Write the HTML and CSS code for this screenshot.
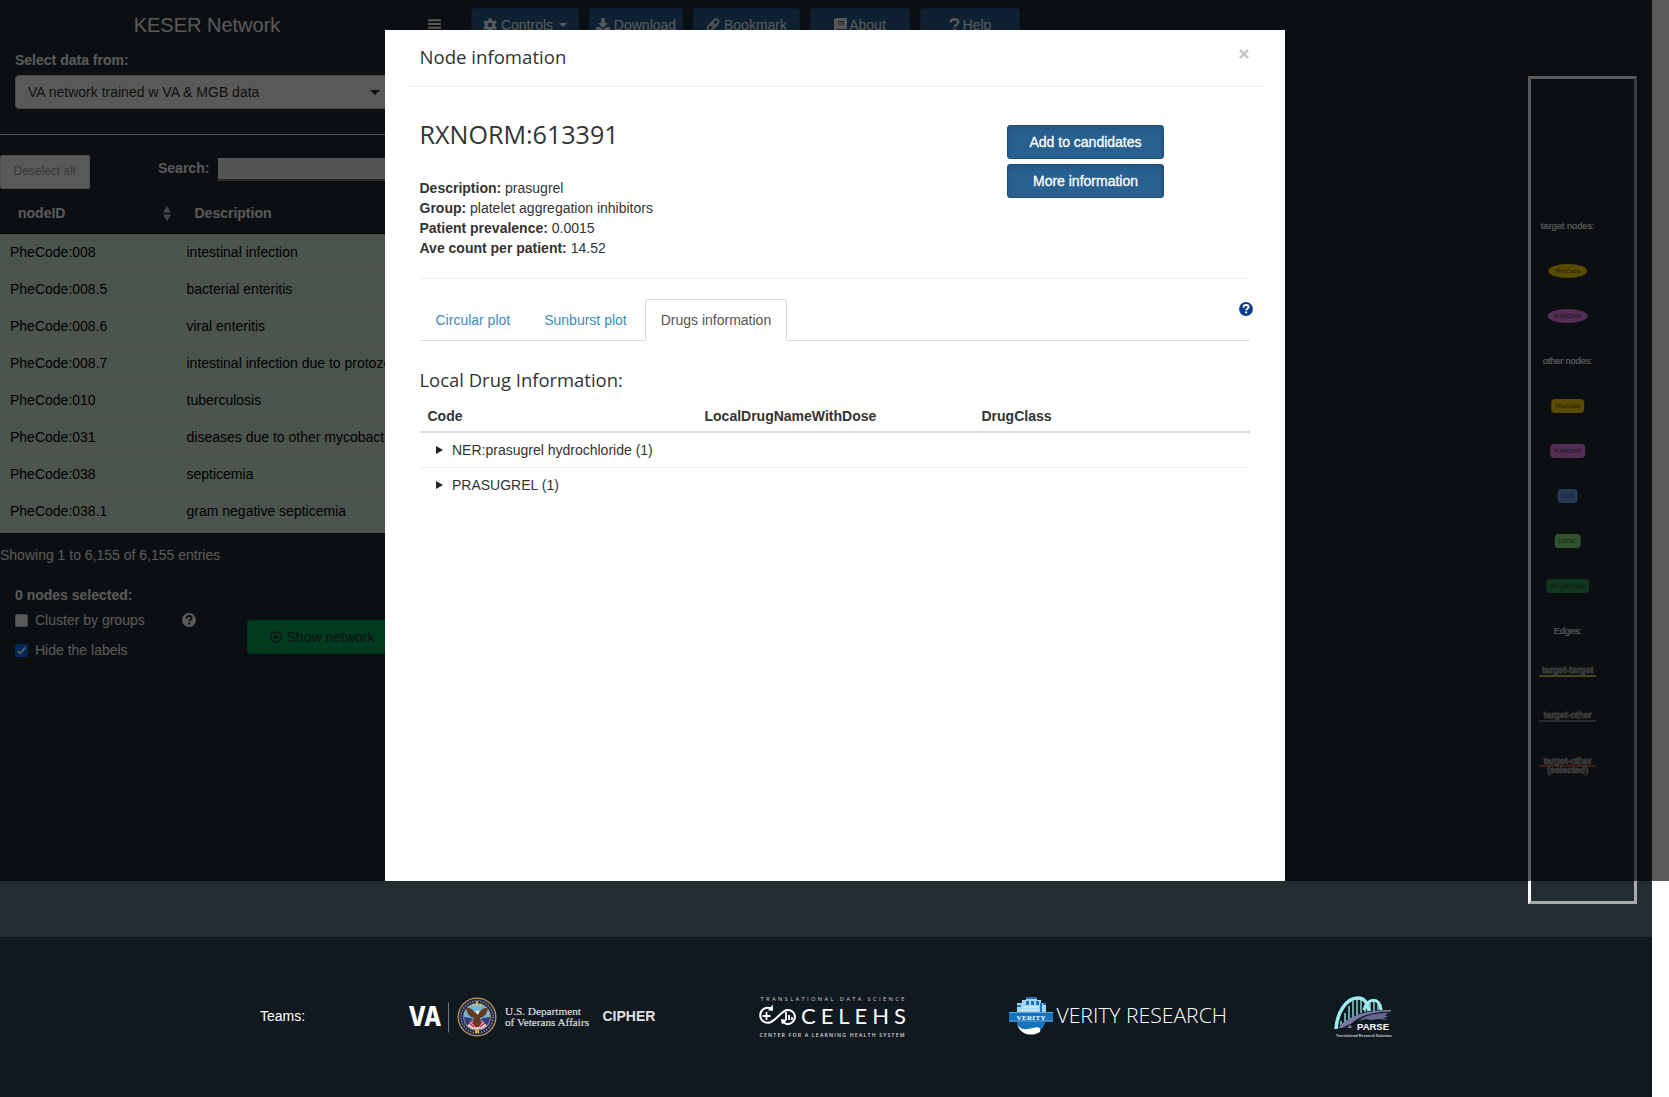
FILE: index.html
```html
<!DOCTYPE html>
<html lang="en">
<head>
<meta charset="utf-8">
<title>KESER Network</title>
<link rel="stylesheet" href="styles.css">
</head>
<body>
<div class="page">
  <main class="app">
    <aside class="sidebar">
      <h1 class="brand">KESER Network</h1>
      <div class="source">
        <label class="bold">Select data from:</label>
        <div class="select"><span>VA network trained w VA &amp; MGB data</span><i class="caret"></i></div>
      </div>
      <div class="rule"></div>
      <div class="tools">
        <button class="deselect">Deselect all</button>
        <span class="search-label">Search:</span>
        <span class="search-input"></span>
      </div>
      <div class="thead">
        <span>nodeID</span>
        <svg class="sort" width="8" height="15" viewBox="0 0 8 15"><path d="M0 6.6L4 0l4 6.6zM0 8.4h8L4 15z" fill="#ccc"/></svg>
        <span>Description</span>
      </div>
      <div class="rows">
        <div class="row"><span>PheCode:008</span><span>intestinal infection</span></div>
        <div class="row"><span>PheCode:008.5</span><span>bacterial enteritis</span></div>
        <div class="row"><span>PheCode:008.6</span><span>viral enteritis</span></div>
        <div class="row"><span>PheCode:008.7</span><span>intestinal infection due to protozoa</span></div>
        <div class="row"><span>PheCode:010</span><span>tuberculosis</span></div>
        <div class="row"><span>PheCode:031</span><span>diseases due to other mycobacteria</span></div>
        <div class="row"><span>PheCode:038</span><span>septicemia</span></div>
        <div class="row"><span>PheCode:038.1</span><span>gram negative septicemia</span></div>
      </div>
      <div class="showing">Showing 1 to 6,155 of 6,155 entries</div>
      <div class="options">
        <div class="checks">
          <div class="bold">0 nodes selected:</div>
          <div class="check first"><i class="box"></i><span>Cluster by groups</span>
            <svg class="hint" width="14" height="14" viewBox="0 0 14 14"><circle cx="7" cy="7" r="7" fill="#fff"/><path d="M4.500 5.500C4.600 3.900 5.700 3.100 7.100 3.100c1.500 0 2.500.8 2.500 2 0 1.700-2.400 1.600-2.400 3.200" fill="none" stroke="#222d32" stroke-width="2"/><rect x="6.100" y="9.400" width="2.100" height="1.900" fill="#222d32"/></svg>
          </div>
          <div class="check"><i class="box on"><svg width="13" height="13" viewBox="0 0 13 13"><path d="M2.800 6.800l2.500 2.600 5-6" fill="none" stroke="#fff" stroke-width="1.900"/></svg></i><span>Hide the labels</span></div>
        </div>
        <button class="show"><svg width="12" height="12" viewBox="0 0 12 12"><circle cx="6" cy="6" r="5.200" fill="none" stroke="#333" stroke-width="1.300"/><path d="M4 3l5 3-5 3z" fill="#333"/></svg>Show network</button>
      </div>
    </aside>
    <nav class="nav">
      <svg class="menu" width="13" height="13" viewBox="0 0 13 13"><path d="M0 1.200h13M0 5h13M0 8.800h13M0 12h13" stroke="#fff" stroke-width="2"/></svg>
      <button class="nbtn w1"><svg width="14" height="14" viewBox="0 0 14 14"><circle cx="7" cy="7" r="3.700" fill="none" stroke="#fff" stroke-width="3"/><path d="M7 0v3M7 11v3M.900 3.500l2.600 1.500M10.500 9l2.600 1.500M.900 10.500L3.500 9M10.500 5l2.600-1.500" stroke="#fff" stroke-width="2.800"/></svg>Controls<i class="caret small"></i></button>
      <button class="nbtn w2"><svg width="14" height="14" viewBox="0 0 14 14"><path d="M5.200 0h3.600v5h3.200L7 10 2 5h3.200zM0 9.300h4l3 2.700 3-2.700h4V14H0z" fill="#fff"/></svg>Download</button>
      <button class="nbtn w3"><svg width="14" height="14" viewBox="0 0 14 14"><g fill="none" stroke="#fff" stroke-width="1.700"><rect x="6.500" y=".8" width="5" height="8" rx="2.500" transform="rotate(42 9 4.800)"/><rect x="2.700" y="4.900" width="5" height="8" rx="2.500" transform="rotate(42 5.200 8.900)"/></g></svg>Bookmark</button>
      <button class="nbtn w4"><svg width="13" height="14" viewBox="0 0 13 14"><path d="M2.500 0H13v10.500h-1v2h1V14H2.500A2.500 2.500 0 0 1 0 11.500v-9A2.500 2.500 0 0 1 2.500 0z" fill="#fff"/><path d="M3.800 3.700h6.500M3.800 6h6.500M2.500 11.500h8.500" stroke="#286090" stroke-width="1.200"/></svg>About</button>
      <button class="nbtn w5"><svg width="11" height="14" viewBox="0 0 11 14"><path d="M1.500 4.500C1.700 2.300 3.200 1.200 5.400 1.200c2.300 0 3.900 1.200 3.900 3 0 2.600-3.700 2.500-3.700 5" fill="none" stroke="#fff" stroke-width="2.400"/><rect x="4.300" y="10.800" width="2.700" height="2.700" fill="#fff"/></svg>Help</button>
    </nav>
    <div class="legend">
      <svg width="103" height="822" viewBox="0 0 103 822">
        <g class="lg-title">
          <text x="36.700" y="150" textLength="54">target nodes:</text>
          <text x="36.700" y="285" textLength="50">other nodes:</text>
          <text x="36.700" y="555" textLength="28">Edges:</text>
        </g>
        <ellipse cx="36.700" cy="192" rx="19.300" ry="7" fill="#ffd700"/>
        <ellipse cx="36.700" cy="237" rx="20" ry="7" fill="#ee82ee"/>
        <rect x="20.200" y="320" width="33" height="14" rx="4" fill="#ffd700"/>
        <rect x="19.200" y="365" width="35" height="14" rx="4" fill="#ee82ee"/>
        <rect x="26.700" y="410" width="20" height="14" rx="4" fill="#6ca6f5"/>
        <rect x="23.700" y="455" width="26" height="14" rx="4" fill="#90ee90"/>
        <rect x="15.200" y="500" width="43" height="14" rx="4" fill="#2e9c58"/>
        <g class="lg-node">
          <text x="36.700" y="194" textLength="25" lengthAdjust="spacingAndGlyphs">PheCode</text>
          <text x="36.700" y="239" textLength="27" lengthAdjust="spacingAndGlyphs">RXNORM</text>
          <text x="36.700" y="329" textLength="25" lengthAdjust="spacingAndGlyphs">PheCode</text>
          <text x="36.700" y="374" textLength="27" lengthAdjust="spacingAndGlyphs">RXNORM</text>
          <text x="36.700" y="419" textLength="13" lengthAdjust="spacingAndGlyphs">CCS</text>
          <text x="36.700" y="464" textLength="19" lengthAdjust="spacingAndGlyphs">LOINC</text>
          <text x="36.700" y="509" textLength="36" lengthAdjust="spacingAndGlyphs">VA Lab Code</text>
        </g>
        <path d="M8 597h57" stroke="#d8c832" stroke-width="2"/>
        <path d="M8 642h57" stroke="#999" stroke-width="1.300"/>
        <path d="M8 686.700h57" stroke="#c65a2c" stroke-width="2"/>
        <g class="lg-edge">
          <text x="36.700" y="594" textLength="51">target-target</text>
          <text x="36.700" y="639" textLength="48">target-other</text>
          <text x="36.700" y="685" textLength="48">target-other</text>
          <text x="36.700" y="694" textLength="41">(selected)</text>
        </g>
      </svg>
    </div>
    <div class="gutter"></div>
  </main>

  <footer class="footer">
    <span class="teams">Teams:</span>
    <svg class="va" width="185" height="46" viewBox="0 0 185 46">
      <text x="3.500" y="31" class="va-mark" textLength="33" lengthAdjust="spacingAndGlyphs">VA</text>
      <path d="M43.500 7.500v30" stroke="#6d747a"/>
      <circle cx="72" cy="22" r="19.500" fill="#c99b4b"/>
      <circle cx="72" cy="22" r="18.300" fill="#1d2855"/>
      <circle cx="72" cy="22" r="16" fill="none" stroke="#a69a7c" stroke-width="1.500" stroke-dasharray="1.200 1.600"/>
      <circle cx="72" cy="22" r="13.800" fill="#c99b4b"/>
      <circle cx="72" cy="22" r="13" fill="#73b3d8"/>
      <path d="M59 22l7 1 6 4 6-4 7-1a13 13 0 0 1-26 0z" fill="#2c3c7c"/>
      <path d="M62 31l5-6 5 5 5-5 5 6-5 3H67z" fill="#d9c9d0"/>
      <path d="M64 28l5 4M66 26l5 6M80 28l-5 4M78 26l-5 6" stroke="#c32f45" stroke-width="1.300"/>
      <path d="M61 13c4-1 7 2 9 5l2-2 2 2c2-3 5-6 9-5-1 5-3 9-8 10l1 5-3 4h-2l-3-4 1-5c-5-1-7-5-8-10z" fill="#653a22"/>
      <path d="M70.500 16l3-.5.5 3-2 1z" fill="#fff"/>
      <path d="M72 6v5M68 9l1 2M76 9l-1 2" stroke="#ddd06a" stroke-width="1.500"/>
      <path d="M70 34h4v4h-4z" fill="#d1a83b"/>
      <text x="100" y="20" class="va-name" textLength="76" lengthAdjust="spacingAndGlyphs">U.S. Department</text>
      <text x="100" y="31" class="va-name" textLength="84" lengthAdjust="spacingAndGlyphs">of Veterans Affairs</text>
    </svg>
    <span class="cipher">CIPHER</span>
    <svg class="celehs" width="150" height="46" viewBox="0 0 150 46">
      <text x="3.500" y="7" class="cel-small" textLength="144">TRANSLATIONAL DATA SCIENCE</text>
      <g fill="none" stroke="#fff" stroke-width="2">
        <path d="M14 14.500A7.500 7.500 0 1 0 14 28C20 25 24 18 29 16.200a7 7 0 1 1-4 10.500"/>
        <path d="M9.500 18v8M5.500 22h8M29 18v8M32 21v5M35 23v3" stroke-width="1.800"/>
      </g>
      <path d="M11 16.500l5 .2-.3-6.200zM24 25l6 1-5 4.500z" fill="#fff"/>
      <text x="44" y="29.500" class="cel-mark" textLength="105">CELEHS</text>
      <text x="2.500" y="42.500" class="cel-sub" textLength="145">CENTER FOR A LEARNING HEALTH SYSTEM</text>
    </svg>
    <svg class="verity" width="222" height="46" viewBox="0 0 222 46">
      <path d="M8 25h28v3a14.500 14.500 0 0 1-28 0z" fill="#1873bd"/>
      <path d="M8 29c3 6 9 6 16 4s8 1 7 4c-8 5-20 3-23-8z" fill="#fff"/>
      <path d="M8 20V8h5V5h4V2h11v3h4v3h5v12z" fill="#a9d5f3"/>
      <path d="M17 2h11v2H17zM17 6h3v4h-3zM22 6h3v4h-3zM27 6h3v4h-3zM31 8h2v11h-2zM8 10h4v2H8zM34 8h3v2h-3z" fill="#1873bd"/>
      <path d="M14 12h15M12 15h17" stroke="#e5f4ff"/>
      <path d="M0 17h44v10H0z" fill="#1873bd"/>
      <path d="M0 17.500h44M0 26h44" stroke="#6fb0df" stroke-width=".8"/>
      <text x="7.500" y="24.700" class="ver-badge" textLength="29">VERITY</text>
      <text x="47.500" y="28" class="ver-name" textLength="170.500" lengthAdjust="spacingAndGlyphs">VERITY RESEARCH</text>
    </svg>
    <svg class="parse" width="64" height="50" viewBox="0 0 64 50">
      <g fill="none" stroke="#9fecf0">
        <path d="M2 34C3 18 12 3 24 3c7 0 9 5 11 13" stroke-width="3.500"/>
        <path d="M30 15C34 2 46 2 47 15" stroke-width="3.200"/>
        <path d="M7 26v4M11 18v9M15 11v13M19 6v16M23 4v16M27 5v13M31 10v7M36 8v8M40 6v10M44 8v7" stroke-width="1.300"/>
      </g>
      <path d="M4 33C15 20 33 15 57 15v1.500C35 17 22 22 13 33h5l-2-4-8 4z" fill="#77779f"/>
      <path d="M24 26c10-7 18-8 31-8l-4 2 3 2-5 1 5 2-9-1-9 1-4-1z" fill="#66668f"/>
      <text x="23" y="35" class="par-name" textLength="32" lengthAdjust="spacingAndGlyphs">PARSE</text>
      <text x="2" y="42" class="par-sub" textLength="56" lengthAdjust="spacingAndGlyphs">Translational Research Solutions</text>
    </svg>
  </footer>

  <div class="backdrop">
    <section class="modal">
      <header class="modal-head">
        <h2>Node infomation</h2>
        <svg class="close" width="10" height="10" viewBox="0 0 10 10"><path d="M1 1l8 8M9 1L1 9" stroke="#c8c8c8" stroke-width="2.600"/></svg>
      </header>
      <div class="modal-body">
        <div class="summary">
          <div class="facts">
            <h3>RXNORM:613391</h3>
            <p><b>Description:</b> prasugrel</p>
            <p><b>Group:</b> platelet aggregation inhibitors</p>
            <p><b>Patient prevalence:</b> 0.0015</p>
            <p><b>Ave count per patient:</b> 14.52</p>
          </div>
          <div class="actions">
            <button class="primary">Add to candidates</button>
            <button class="primary">More information</button>
          </div>
        </div>
        <div class="tabs">
          <span class="tab">Circular plot</span>
          <span class="tab">Sunburst plot</span>
          <span class="tab active">Drugs information</span>
          <svg class="help" width="14" height="14" viewBox="0 0 14 14"><circle cx="7" cy="7" r="6.900" fill="#0d3a8c"/><path d="M4.500 5.500C4.600 3.900 5.700 3.100 7.100 3.100c1.500 0 2.500.8 2.500 2 0 1.700-2.400 1.600-2.400 3.200" fill="none" stroke="#fff" stroke-width="2"/><rect x="6.100" y="9.400" width="2.100" height="1.900" fill="#fff"/></svg>
        </div>
        <h4>Local Drug Information:</h4>
        <div class="drug head"><span>Code</span><span>LocalDrugNameWithDose</span><span>DrugClass</span></div>
        <div class="drug item"><i class="arrow"></i>NER:prasugrel hydrochloride (1)</div>
        <div class="drug item last"><i class="arrow"></i>PRASUGREL (1)</div>
      </div>
    </section>
  </div>
</div>
</body>
</html>
```
FILE: styles.css
```css
* { box-sizing: border-box; }
body { margin: 0; font: 14px/20px "Liberation Sans", Arial, sans-serif; color: #333; background: #fff; }
h1, h2, h3, h4, p { margin: 0; font-weight: 400; }
button { font: inherit; cursor: pointer; }
svg { display: block; flex: none; }
i { display: block; flex: none; }

.page { position: relative; width: 1669px; height: 1097px; overflow: hidden; }
.app { display: flex; height: 937px; background: #222d32; color: #fff; }
.bold { font-weight: 700; }

/* sidebar */
.sidebar { width: 414px; flex: none; overflow: hidden; }
.brand { font-size: 20px; line-height: 50px; text-align: center; }
.source { padding-left: 15px; }
.source label { display: block; margin-bottom: 5px; }
.select { display: flex; align-items: center; justify-content: space-between; width: 376px; height: 34px; padding: 0 10px 0 12px; border: 1px solid #ccc; border-radius: 4px; background: #fff; color: #333; }
.caret { border: 5px solid transparent; border-top-color: #333; border-bottom: 0; }
.caret.small { border-width: 4px 4px 0; border-top-color: #fff; margin-left: 2px; }
.rule { height: 1px; margin-top: 25px; background: #eee; }
.tools { display: flex; height: 54px; padding-top: 20px; }
.deselect { width: 90px; height: 34px; margin-right: 68px; padding: 0 1px 3px 0; border: 1px solid #ddd; border-radius: 2px; background: #fff; color: #a0a0a0; font-size: 12px; }
.search-label { width: 59px; padding-top: 3px; font-weight: 700; }
.search-input { flex: 1; height: 24px; margin-top: 2px; border: 1px solid #333; border-bottom: 2px solid #777; background: #efefef; }
.thead { display: flex; height: 45px; padding: 14px 0 0 18px; border-bottom: 1px solid #000; font-weight: 700; }
.thead span:first-child { width: 144.500px; }
.sort { margin: 3px 24px 0 0; }
.rows { height: 300px; border-bottom: 1px solid #000; background: #d6f2df; color: #000; overflow: hidden; }
.row { display: flex; height: 37px; padding: 8px 0 0 10px; border-bottom: 1px solid #e0d6d4; white-space: nowrap; }
.row span:first-child { width: 176.500px; flex: none; }
.showing { margin-top: 11px; }
.options { display: flex; margin-top: 20px; padding-left: 15px; }
.checks { width: 232px; flex: none; }
.check { display: flex; align-items: center; height: 20px; margin-top: 10px; }
.check.first { margin-top: 5px; }
.box { width: 13px; height: 13px; margin-right: 7px; border: 1px solid #ccc; border-radius: 2px; background: #fff; }
.box.on { border: 0; background: #0075ff; }
.hint { margin-left: 37px; }
.show { display: flex; align-items: center; justify-content: center; gap: 5px; width: 152px; height: 34px; margin-top: 35px; padding: 0 8px 0 6px; flex: none; border: 1px solid #008d4c; border-radius: 3px; background: #00a65a; color: #333; }

/* top bar */
.nav { display: flex; align-items: flex-start; gap: 10px; width: 1114px; padding: 8px 0 0 14px; flex: none; }
.menu { margin: 11px 20px 0 0; }
.nbtn { display: flex; align-items: center; justify-content: center; gap: 4px; height: 34px; padding: 0; border: 1px solid #204d74; border-radius: 3px; background: #286090; color: #fff; }
.w1 { width: 108px; }
.w2 { width: 94px; }
.w3 { width: 107px; }
.w4 { width: 100px; gap: 2px; }
.w5 { width: 100px; gap: 3px; }

/* legend */
.legend { width: 109px; height: 828px; margin-top: 76px; flex: none; border: 3px solid; border-color: #fff #aaa #aaa #fff; }
.legend text { text-anchor: middle; font-family: "DejaVu Sans", sans-serif; }
.legend .lg-title text { font-family: "Liberation Sans", sans-serif; font-size: 9.300px; fill: #fff; stroke: #fff; stroke-width: .2px; }
.legend .lg-node text { font-size: 5.800px; fill: #222; fill-opacity: .8; }
.legend .lg-edge text { font-family: "Liberation Sans", sans-serif; font-size: 9px; fill: #343434; stroke: #a0a0a0; stroke-width: 1.100px; }
.gutter { width: 17px; margin-left: 15px; flex: none; background: #fff; }

/* footer */
.footer { display: flex; align-items: flex-start; width: 1652px; height: 160px; padding: 58px 0 0 260px; background: #101820; color: #fff; }
.teams { width: 145px; padding-top: 11px; flex: none; }
.cipher { width: 139px; margin-left: 12.500px; padding-top: 11px; flex: none; font-weight: 700; color: #e0e0e0; }
.celehs { margin: -1px 102px 0 15px; }
.va-mark { font: 800 27px "Inter", sans-serif; fill: #fff; }
.va-name { font: 10.500px "Liberation Serif", serif; fill: #ddd; stroke: #ddd; stroke-width: .2px; }
.cel-small { font: 5.800px "Open Sans", sans-serif; fill: #ccc; }
.cel-sub { font: 600 5.200px "Open Sans", sans-serif; fill: #ddd; }
.cel-mark { font: 22px Lato, sans-serif; fill: #fff; }
.ver-badge { font: 700 7px "Liberation Serif", serif; fill: #fff; }
.ver-name { font: 300 21px "Open Sans", sans-serif; fill: #fff; }
.parse { margin-left: 103px; }
.par-name { font: 700 8.500px "Liberation Sans", sans-serif; fill: #fff; }
.par-sub { font: 700 4px "Liberation Sans", sans-serif; fill: #ccc; }

/* modal */
.backdrop { position: absolute; top: 0; left: 0; width: 1669px; height: 881px; padding: 30px 0 0 385px; background: rgba(0, 0, 0, .65); }
.modal { width: 900px; height: 851px; padding: 0 20px; background: #fff; }
.modal-head { display: flex; justify-content: space-between; height: 57px; padding: 14px 16px 0 14.500px; border-bottom: 1px solid #f2f2f2; }
.modal-head h2, .modal h4 { font: 18.600px/26px "Open Sans", sans-serif; }
.close { margin-top: 5px; }
.modal-body { padding: 0 15px 0 14.500px; }
.summary { display: flex; height: 192px; border-bottom: 1px solid #eee; }
.facts { width: 587.500px; padding-top: 29px; }
.facts h3 { height: 62px; font: 25.100px/36px "Open Sans", sans-serif; }
.actions { display: flex; flex-direction: column; gap: 5px; padding-top: 38px; }
.primary { width: 157px; height: 34px; padding: 0; border: 1px solid #204d74; border-radius: 3px; background: #286090; box-shadow: inset 0 3px 5px rgba(0, 0, 0, .125); color: #fff; -webkit-text-stroke: .3px #fff; }
.tabs { display: flex; gap: 2px; height: 62px; padding-top: 20px; border-bottom: 1px solid #ddd; }
.tab { height: 42px; padding: 10px 15px; border: 1px solid transparent; color: #3c8dbc; }
.tab.active { border-color: #ddd #ddd #fff; border-radius: 4px 4px 0 0; background: #fff; color: #555; }
.help { margin: 3px -3px 0 auto; }
.modal h4 { margin-top: 26px; font-size: 18.450px; }
.drug.head { display: grid; grid-template-columns: 277px 277px 1fr; height: 45px; padding: 18px 0 0 8px; border-bottom: 2px solid #ddd; margin-top: -5px; font-weight: 700; }
.drug.item { display: flex; align-items: center; height: 35px; padding-left: 16.500px; border-bottom: 1px solid #eee; }
.drug.item.last { height: 34px; border: 0; }
.arrow { margin-right: 9px; border: 4.500px solid transparent; border-left: 7px solid #222; border-right: 0; }
```
